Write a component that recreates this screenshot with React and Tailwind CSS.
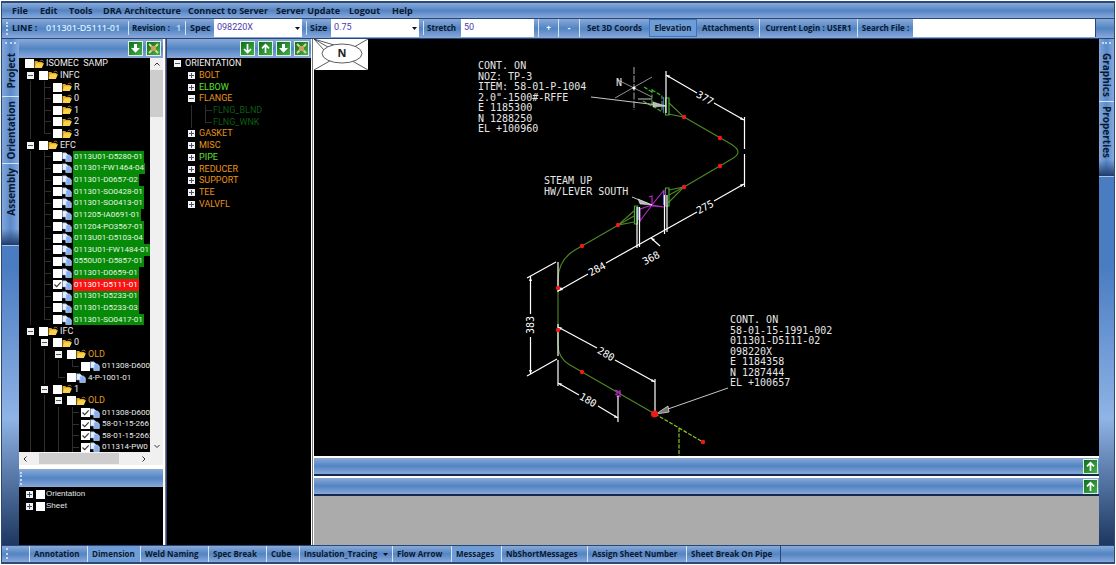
import React from "react";

const BAR = "bg-linear-to-b from-[#8aa9d8] via-[#5285c3] to-[#8aa8da]";
const TINY = "font-['Open_Sans',sans-serif] font-bold text-[#0b1830]";

const menus = [
  ["File", "w-[28px]"],
  ["Edit", "w-[29px]"],
  ["Tools", "w-[34px]"],
  ["DRA Architecture", "w-[85px]"],
  ["Connect to Server", "w-[88px]"],
  ["Server Update", "w-[73px]"],
  ["Logout", "w-[43px]"],
  ["Help", "w-[30px]"],
];

const bottomButtons = [
  { text: "Annotation", width: "w-[58px]" },
  { text: "Dimension", width: "w-[53px]", on: true },
  { text: "Weld Naming", width: "w-[68px]" },
  { text: "Spec Break", width: "w-[58px]" },
  { text: "Cube", width: "w-[33px]" },
  { text: "Insulation_Tracing", width: "w-[93px]", arrow: true },
  { text: "Flow Arrow", width: "w-[59px]" },
  { text: "Messages", width: "w-[50px]", on: true },
  { text: "NbShortMessages", width: "w-[86px]" },
  { text: "Assign Sheet Number", width: "w-[99px]" },
  { text: "Sheet Break On Pipe", width: "w-[94px]" },
];

/* cells: "+" / "-" expander, "|" guide, "t" branch, "l" last branch, " " empty */
const projectRows = [
  ["", "folder", "ISOMEC  SAMP"],
  ["-", "folder", "INFC"],
  ["|t", "folder", "R"],
  ["|t", "folder", "0"],
  ["|t", "folder", "1"],
  ["|t", "folder", "2"],
  ["|l", "folder", "3"],
  ["-", "folder", "EFC"],
  ["|t", "doc", "0113U01-D5280-01", "green"],
  ["|t", "doc", "011301-FW1464-04", "green"],
  ["|t", "doc", "011301-D0657-02", "green"],
  ["|t", "doc", "011301-SO0428-01", "green"],
  ["|t", "doc", "011301-SO0413-01", "green"],
  ["|t", "doc", "011205-IA0691-01", "green"],
  ["|t", "doc", "011204-PO3567-01", "green"],
  ["|t", "doc", "0113U01-D5103-04", "green"],
  ["|t", "doc", "0113U01-FW1484-01", "green"],
  ["|t", "doc", "0550U01-D5857-01", "green"],
  ["|t", "doc", "011301-D0659-01", "green"],
  ["|t", "doc", "011301-D5111-01", "red", true],
  ["|t", "doc", "011301-D5233-01", "green"],
  ["|t", "doc", "011301-D5233-03", "green"],
  ["|l", "doc", "011301-SO0417-01", "green"],
  ["-", "folder", "IFC"],
  ["|-", "folder", "0"],
  ["||-", "folder", "OLD", "orange"],
  ["|||l", "doc", "011308-D600"],
  ["||l", "doc", "4-P-1001-01"],
  ["|-", "folder", "1"],
  ["||-", "folder", "OLD", "orange"],
  ["|||t", "doc", "011308-D600", "", true],
  ["|||t", "doc", "58-01-15-266", "", true],
  ["|||t", "doc", "58-01-15-2662", "", true],
  ["|||t", "doc", "011314-PW0", "", true],
];

const orientationRows = [
  ["-", "ORIENTATION", "text-[#f0f0f0]"],
  [" +", "BOLT", "text-[#e8941a]"],
  [" +", "ELBOW", "text-[#5fe02c]"],
  [" -", "FLANGE", "text-[#e8941a]"],
  [" |t", "FLNG_BLND", "text-[#0b5c12]"],
  [" |l", "FLNG_WNK", "text-[#0b5c12]"],
  [" +", "GASKET", "text-[#e8941a]"],
  [" +", "MISC", "text-[#e8941a]"],
  [" +", "PIPE", "text-[#5fe02c]"],
  [" +", "REDUCER", "text-[#e8941a]"],
  [" +", "SUPPORT", "text-[#e8941a]"],
  [" +", "TEE", "text-[#e8941a]"],
  [" +", "VALVFL", "text-[#e8941a]"],
];

const tones = {
  green: "bg-[#078a07] text-[#e4f5e4]",
  red: "bg-[#fb1111] text-white",
  orange: "text-[#e09a22]",
};

function Cell({ kind }) {
  if (kind === "+" || kind === "-") {
    return (
      <button type="button" aria-label={kind === "+" ? "Expand" : "Collapse"} className="flex w-[14px] shrink-0 items-center justify-center self-stretch">
        <svg viewBox="0 0 7 7" className="size-[7px]">
          <rect width="7" height="7" fill="#f2f2f2" />
          <path d={kind === "+" ? "M1 3.5H6M3.5 1V6" : "M1 3.5H6"} stroke="#4a5272" />
        </svg>
      </button>
    );
  }
  return (
    <span className="flex w-[14px] shrink-0 justify-end self-stretch">
      {kind !== " " && (
        <span className="flex w-[7px] flex-col">
          <span className={kind === "|" ? "flex-1 border-l border-[#2e2e2e]" : "flex-1 border-b border-l border-[#2e2e2e]"} />
          <span className={kind === "l" ? "flex-1" : "flex-1 border-l border-[#2e2e2e]"} />
        </span>
      )}
    </span>
  );
}

function Tick({ checked }) {
  return (
    <span className="relative flex shrink-0">
      <input type="checkbox" defaultChecked={checked} className="peer size-[9px] appearance-none bg-white" />
      <svg viewBox="0 0 9 9" className="pointer-events-none absolute inset-0 hidden size-[9px] peer-checked:block">
        <path d="M1.5 4.5L3.7 6.7L7.7 2.3" fill="none" stroke="#333" strokeWidth="1.1" />
      </svg>
    </span>
  );
}

function NodeIcon({ type }) {
  return (
    <svg viewBox="0 0 10 10" className="size-[10px] shrink-0">
      {type === "folder" ? (
        <g>
          <path d="M0.5 8.5V2H3.2L4.2 3H8.5V5" fill="#e2aa28" />
          <path d="M0.5 9L2.4 4.2H10L7.8 9Z" fill="#fbd24a" />
          <path d="M5.500 2.200L8 1L9.500 2.400" fill="none" stroke="#b98a2a" strokeWidth="0.8" />
        </g>
      ) : (
        <g>
          <path d="M0.5 0.8H4L5.5 2.3V7H0.5Z" fill="#e6effd" stroke="#86a8e0" strokeWidth="0.5" />
          <path d="M3.8 3H7.4L9.3 4.8V9.6H3.8Z" fill="#86aef2" stroke="#e8f0ff" strokeWidth="0.6" />
        </g>
      )}
    </svg>
  );
}

function ActionIcon({ kind, label }) {
  return (
    <button type="button" aria-label={label} className="size-[15px] shrink-0 border border-[#dff0df] bg-linear-to-br from-[#0e6e1e] to-[#45b04a]">
      <svg viewBox="0 0 13 13" className="size-[13px]" fill="none" stroke="#fff" strokeWidth="1.7">
        {kind === "down" && <path d="M6.5 2V10.5M3 7L6.5 10.5L10 7" />}
        {kind === "up" && <path d="M6.5 11V2.8M3 6.3L6.5 2.8L10 6.3" />}
        {kind === "drop" && <path d="M5 2H8V6H11L6.5 10.8L2 6H5Z" fill="#fff" stroke="none" />}
        {kind === "close" && (
          <g>
            <path d="M2 2L11 11M11 2L2 11" stroke="#dcd79a" strokeWidth="1.8" />
            <path d="M4 4H9V9H4Z" fill="#c9a25a" stroke="none" />
          </g>
        )}
      </svg>
    </button>
  );
}

function Divider() {
  return <span className="h-[14px] w-px shrink-0 bg-[#d3e2f6]" />;
}

function Grip() {
  return <span className="h-[13px] border-l-2 border-dotted border-[#c4d8f2]" />;
}

function SelectBox({ id, label, value, labelWidth }) {
  return (
    <div className="flex items-center self-stretch">
      <label htmlFor={id} className={labelWidth}>{label}</label>
      <span className="relative flex w-[88px] self-stretch">
        <select id={id} defaultValue={value} className="h-full w-full appearance-none bg-white pl-[3px] font-['Roboto',sans-serif] text-[9px] font-normal text-[#4a3cb0]">
          <option>{value}</option>
        </select>
        <svg viewBox="0 0 5 3" className="pointer-events-none absolute top-2 right-[2px] h-[3px] w-[5px]"><path d="M0 0H5L2.5 3Z" fill="#111" /></svg>
      </span>
    </div>
  );
}

function Toolbar() {
  return (
    <div className={`flex h-[20px] shrink-0 items-center border-t border-[#24487a] pb-px pl-1 text-[9px] whitespace-nowrap ${BAR} ${TINY}`}>
      <Grip />
      <span className="w-[38px] pl-1">LINE :</span>
      <span className="w-[82px] font-semibold text-[#d8ecff]">011301-D5111-01</span>
      <Divider />
      <span className="w-[47px] pl-[3px] text-[8px]">Revision :</span>
      <span className="w-[9px] font-semibold text-[#c4e0ff]">1</span>
      <Divider />
      <SelectBox id="spec" label="Spec" value="098220X" labelWidth="w-[28px] pl-1" />
      <div className="w-[4px]" />
      <Divider />
      <SelectBox id="size" label="Size" value="0.75" labelWidth="w-[24px] pl-[3px]" />
      <div className="w-[4px]" />
      <Divider />
      <label htmlFor="stretch" className="w-[37px] pl-[3px] text-[8px]">Stretch</label>
      <input id="stretch" defaultValue="50" className="w-[73px] self-stretch bg-white pl-[3px] font-['Roboto',sans-serif] text-[9px] font-normal text-[#4a3cb0]" />
      <div className="flex self-stretch text-[8px]">
        <button type="button" className="ml-1 w-[20px] border-l border-[#d3e2f6] text-white">+</button>
        <button type="button" className="w-[21px] border-l border-[#d3e2f6] text-white">-</button>
        <button type="button" className="w-[70px] border-l border-[#d3e2f6] text-center">Set 3D Coords</button>
        <button type="button" className="w-[48px] border border-[#3f74b4] bg-[#6d9cd6] text-center">Elevation</button>
        <button type="button" className="w-[62px] text-center">Attachments</button>
        <span className="flex w-[98px] items-center justify-center border-l border-[#d3e2f6]">Current Login : USER1</span>
      </div>
      <label htmlFor="search" className="flex w-[56px] items-center justify-center self-stretch border-l border-[#d3e2f6] text-[8px]">Search File :</label>
      <input id="search" className="mr-[18px] min-w-0 flex-1 self-stretch border-r border-[#24487a] bg-white px-1 text-[8px] font-normal" />
    </div>
  );
}

function SideTabs({ items, flip }) {
  return (
    <div className={`flex shrink-0 flex-col bg-linear-to-b from-[#4a7cc2] from-45% via-[#8fb4e6] via-75% to-[#1d3861] ${flip ? "w-[17px]" : "w-[15px]"}`}>
      <div className={`flex flex-col items-stretch border-b border-[#a9c4ea] bg-linear-to-r from-[#82a6da] via-[#5a8bcb] to-[#86a9dc] text-[10px] ${TINY}`}>
        <span className="mx-[3px] mt-[3px] mb-[5px] border-t-2 border-dotted border-[#c4d8f2]" />
        {items.map(([text, height], i) => (
          <button key={text} type="button" className={`flex items-start justify-center pt-1 leading-none whitespace-nowrap ${i ? "border-t border-[#d3e2f6]" : ""} ${height}`}>
            <span className={flip ? "rotate-180 [writing-mode:vertical-rl]" : "[writing-mode:vertical-rl]"}>{text}</span>
          </button>
        ))}
        <span className="h-[16px] bg-linear-to-b from-transparent to-[#1d3c6c]" />
      </div>
    </div>
  );
}

function ProjectTree() {
  return (
    <div className="flex min-h-0 flex-1 flex-col bg-[#f0f0f0]">
      <div className="flex min-h-0 flex-1">
        <div className="min-w-0 flex-1 overflow-hidden bg-black">
          <div className="flex h-[395px] flex-col pl-1 font-['Roboto',sans-serif] leading-none text-[#ececec]">
            {projectRows.map(([cells, icon, text, tone, checked], i) => (
              <div key={i} className="flex flex-1 items-center">
                {[...cells].map((c, k) => <Cell key={k} kind={c} />)}
                <label className="flex items-center self-stretch pl-[2px] whitespace-pre">
                  <Tick checked={checked} />
                  <NodeIcon type={icon} />
                  <span className={`ml-[1px] flex items-center self-stretch px-px ${icon === "doc" ? "text-[8px]" : "text-[9px]"} ${tones[tone] || ""}`}>{text}</span>
                </label>
              </div>
            ))}
          </div>
        </div>
        <div className="flex w-[13px] flex-col items-center text-[#333]">
          <svg viewBox="0 0 12 12" className="size-[12px]" fill="none" stroke="currentColor"><path d="M3.5 7.5L6 5L8.5 7.5" /></svg>
          <span className="h-[47px] w-full bg-[#cdcdcd]" />
          <span className="flex-1" />
          <svg viewBox="0 0 12 12" className="size-[12px]" fill="none" stroke="currentColor"><path d="M3.5 5L6 7.5L8.5 5" /></svg>
        </div>
      </div>
      <div className="flex h-[13px] items-center pr-[13px] text-[#333]">
        <svg viewBox="0 0 12 12" className="size-[12px]" fill="none" stroke="currentColor"><path d="M7.5 3.5L5 6L7.5 8.5" /></svg>
        <span className="ml-2 h-[11px] w-[80px] bg-[#cdcdcd]" />
        <span className="flex-1" />
        <svg viewBox="0 0 12 12" className="size-[12px]" fill="none" stroke="currentColor"><path d="M4.5 3.5L7 6L4.5 8.5" /></svg>
      </div>
    </div>
  );
}

const Dot = ({ x, y }) => <circle cx={x} cy={y} r="2.2" fill="#f01818" />;

function Dim({ x, y, angle, children }) {
  return (
    <text transform={`translate(${x} ${y}) rotate(${angle})`} textAnchor="middle" dominantBaseline="central" fontSize="10" fill="#fff">
      {children}
    </text>
  );
}

function Note({ x, y, step, lines }) {
  return (
    <text fontSize="10" fill="#e6e6e6">
      {lines.map((line, i) => <tspan key={i} x={x} y={y + i * step}>{line}</tspan>)}
    </text>
  );
}

function PipeDrawing() {
  return (
    <svg viewBox="314 39 785 417" className="absolute inset-0 h-full w-full font-['DejaVu_Sans_Mono',monospace]">
      <Note x={478} y={69} step={10.5} lines={["CONT. ON", "NOZ: TP-3", "ITEM: 58-01-P-1004", "2.0\"-1500#-RFFE", "E 1185300", "N 1288250", "EL +100960"]} />
      <Note x={544} y={184} step={11} lines={["STEAM UP", "HW/LEVER SOUTH"]} />
      <Note x={730} y={323} step={10.5} lines={["CONT. ON", "58-01-15-1991-002", "011301-D5111-02", "098220X", "E 1184358", "N 1287444", "EL +100657"]} />

      <g fill="none" stroke="#4f8a26" strokeWidth="1.1">
        <path d="M684 117L730 143.500Q738 148 738 152T730 160L684 187" />
        <path d="M684 187L669 195M634 216L575 250Q558 260 558 280V345Q558 358 570 365L655 414" />
        <path d="M669 103L684 117L668 114M669 190L684 187L668 203M634 211L618 225L634 222" />
      </g>
      <g fill="none" stroke="#3fae2a" strokeWidth="1.2">
        <path d="M665.500 98H669V115H665.500ZM665.500 188H669V206H665.500ZM634.500 206H637.500V224H634.500Z" />
        <path d="M644 87L652 92M643 101L652 106M652 89V106M652 90L662 96V112M653 106L662 112" strokeDasharray="4 1.5" />
      </g>
      <path d="M655 414L703 442M679 428V456" stroke="#8ac820" strokeWidth="1.2" strokeDasharray="4 1.500" />
      <path d="M663.500 97V113M638.500 207V220M663.500 190V205" stroke="#5a5ce0" />

      <g fill="none" stroke="#b028c0" strokeWidth="1.2">
        <path d="M640 222V208M665 190V207M640 221L652 205L664 190M652 206L664 207M640 209L652 205L664 207M649 197L652 196V205" />
        <path d="M615 390L621 393M615 394L621 397M617 390V397M620 390V397" />
      </g>

      <g stroke="#fff" strokeWidth="1.2" fill="none">
        <path d="M666 71V113M666 75L697 93M714 103L744 120M744.500 117V149M744.500 154V187M744 184L714 201" />
        <path d="M697 212L606 263M588 274L558 291M651 238L660 246" />
        <path d="M664.500 195V234M667 195V232M637 207V248M639.500 207V247" />
        <path d="M530.500 276V314M530.500 337V374M527 278L556 262M527 376L557 359" />
        <path d="M558 262V292M558 324V356M558 360V386" />
        <path d="M558 327L597 348M615 360L655 382M655 379V411M558 383L579 395M598 406L618 418M618 396V422" />
      </g>
      <g fill="#fff">
        <path d="M666 75L670 75.500L669 78ZM744 120L740 119.500L741 117ZM744 184L740 184.500L741 187ZM558 291L561 287L563 290Z" />
        <path d="M558 327L562 327.500L561 330ZM655 382L651 381.500L652 379ZM558 383L562 383.500L561 386ZM618 418L614 417.500L615 415Z" />
        <path d="M530.500 277L529 281H532ZM530.500 374L529 370H532ZM651 238L655 239L653 241Z" />
      </g>

      <g stroke="#c8c8c8" strokeWidth="1" fill="none">
        <path d="M591 97L666 106M638 99H652M632 197L652 205M728 388L668 409" />
        <path d="M652 77L615 98M618 80L652 97" stroke="#909090" />
        <path d="M634 67V110" stroke="#a8a8a8" strokeDasharray="7 1.500" />
      </g>
      <circle cx="634" cy="88" r="1.600" fill="#fff" />
      <path d="M652 205L638 199L640 204ZM666 106L653 102V107Z" fill="#b8b8b8" stroke="#eee" strokeWidth="0.500" />
      <path d="M656 414L668 406L669 412Z" fill="#777" stroke="#ddd" strokeWidth="0.800" />
      <text x="616" y="86" fontSize="10" fill="#e6e6e6">N</text>

      <Dot x={684} y={117} /><Dot x={720} y={138} /><Dot x={720} y={166} /><Dot x={684} y={187} />
      <Dot x={618} y={225} /><Dot x={582} y={246} /><Dot x={558} y={288} /><Dot x={558} y={330} />
      <Dot x={582} y={372} /><Dot x={703} y={442} />
      <circle cx="654.500" cy="414" r="3.500" fill="#f01818" />

      <Dim x={705} y={98} angle={30}>377</Dim>
      <Dim x={705} y={207} angle={-28}>275</Dim>
      <Dim x={651} y={258} angle={-28}>368</Dim>
      <Dim x={597} y={269} angle={-28}>284</Dim>
      <Dim x={530} y={325} angle={-90}>383</Dim>
      <Dim x={606} y={354} angle={30}>280</Dim>
      <Dim x={588} y={400} angle={30}>180</Dim>
    </svg>
  );
}

function NorthBadge() {
  return (
    <button type="button" aria-label="North direction" className="absolute top-0 left-0 h-[31px] w-[54px] bg-white">
      <svg viewBox="0 0 54 31" className="h-full w-full" fill="none" stroke="#333" strokeWidth="0.8">
        <path d="M0 0L54 31M54 0L0 31M0 0L20 6M0 0L10 11" />
        <ellipse cx="28" cy="14.500" rx="20" ry="9.500" fill="#fff" />
        <text x="28" y="18" textAnchor="middle" fontSize="11" fill="#222" stroke="none" className="font-['Open_Sans',sans-serif] font-bold">N</text>
      </svg>
    </button>
  );
}

function DockBar() {
  return (
    <div className={`flex h-[20px] shrink-0 items-center justify-end border-t-2 border-b-2 border-t-white border-b-[#152a4c] pr-px ${BAR}`}>
      <ActionIcon kind="up" label="Show panel" />
    </div>
  );
}

export default function App() {
  return (
    <div className="flex h-screen flex-col overflow-hidden bg-white p-px">
      <div className="flex min-h-0 flex-1 flex-col border border-y-2 border-[#2c4a78]">
        <nav className={`flex h-[15px] shrink-0 items-center pl-[10px] text-[9px] leading-none whitespace-nowrap ${BAR} ${TINY}`}>
          {menus.map(([text, width]) => (
            <button key={text} type="button" className={`text-left ${width}`}>{text}</button>
          ))}
        </nav>
        <Toolbar />

        <div className="flex min-h-0 flex-1 border-t border-[#24487a]">
          <SideTabs flip items={[["Project", "h-[47px]"], ["Orientation", "h-[67px]"], ["Assembly", "h-[66px]"]]} />

          <aside className="flex w-[144px] shrink-0 flex-col">
            <div className={`flex h-[19px] shrink-0 items-center justify-end gap-[3px] pr-[2px] ${BAR}`}>
              <ActionIcon kind="drop" label="Load" />
              <ActionIcon kind="close" label="Close" />
            </div>
            <ProjectTree />
            <div className={`mt-[3px] flex h-[19px] shrink-0 items-center border-t border-white pl-[1px] ${BAR}`}>
              <Grip />
            </div>
            <div className="flex h-[58px] shrink-0 flex-col bg-black pt-px pl-[3px] font-['Liberation_Sans',sans-serif] text-[8px] leading-none text-[#e6e6e6]">
              {["Orientation", "Sheet"].map((text) => (
                <div key={text} className="flex h-[12px] items-center">
                  <Cell kind="+" />
                  <label className="flex items-center gap-px"><Tick />{text}</label>
                </div>
              ))}
            </div>
          </aside>

          <div className="w-[4px] shrink-0 border-r border-l-2 border-r-[#24487a] border-l-white bg-[#777]" />

          <aside className="flex w-[144px] shrink-0 flex-col bg-black">
            <div className={`flex h-[19px] shrink-0 items-center justify-end gap-[3px] pr-[2px] ${BAR}`}>
              <ActionIcon kind="down" label="Next" />
              <ActionIcon kind="up" label="Previous" />
              <ActionIcon kind="drop" label="Load" />
              <ActionIcon kind="close" label="Close" />
            </div>
            <div className="flex h-[152px] flex-col pl-[3px] font-['Roboto',sans-serif] text-[9px] leading-none">
              {orientationRows.map(([cells, text, color]) => (
                <div key={text} className={`flex flex-1 items-center ${color}`}>
                  {[...cells].map((c, k) => <Cell key={k} kind={c} />)}
                  <span className="pl-px">{text}</span>
                </div>
              ))}
            </div>
          </aside>

          <div className="w-[3px] shrink-0 border-r border-l border-white bg-[#777]" />

          <main className="flex min-w-0 flex-1 flex-col">
            <div className="relative min-h-0 flex-1 bg-black">
              <PipeDrawing />
              <NorthBadge />
            </div>
            <DockBar />
            <DockBar />
            <div className="h-[49px] shrink-0 bg-[#ababab]" />
          </main>

          <SideTabs items={[["Graphics", "h-[52px]"], ["Properties", "h-[59px]"]]} />
        </div>

        <footer className={`flex h-[17px] shrink-0 items-center border-t border-[#24487a] pl-1 text-[8px] whitespace-nowrap ${BAR} ${TINY}`}>
          <span className="w-[23px]"><Grip /></span>
          {bottomButtons.map(({ text, width, on, arrow }) => (
            <button key={text} type="button" className={`flex shrink-0 items-center justify-between self-stretch border-l border-[#d3e2f6] px-1 leading-none ${width} ${on ? "bg-[#6d9cd6]" : ""}`}>
              {text}
              {arrow && <svg viewBox="0 0 5 3" className="h-[3px] w-[5px]"><path d="M0 0H5L2.500 3Z" fill="#111" /></svg>}
            </button>
          ))}
          <span className="h-full w-px bg-[#24487a]" />
        </footer>
      </div>
    </div>
  );
}
